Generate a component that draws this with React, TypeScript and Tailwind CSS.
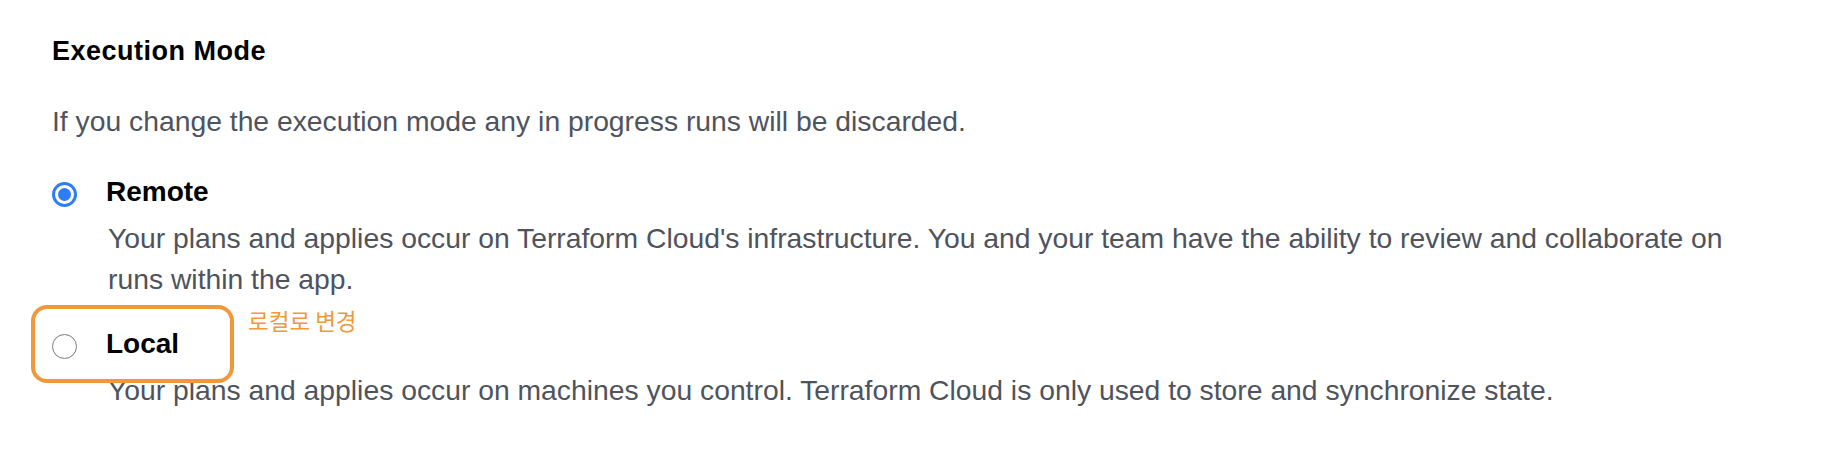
const font = { fontFamily: '"Liberation Sans", Arial, sans-serif' };

interface OptionProps {
    label: string;
    description: string;
    checked: boolean;
    children?: React.ReactNode;
}

const Radio = ({ checked }: { checked: boolean }) => {
    if (checked) {
        return (
            <span className="mt-[11px] flex h-[25px] w-[25px] shrink-0 items-center justify-center rounded-full border-[3px] border-[#2f7df6] bg-white">
                <span className="h-[13px] w-[13px] rounded-full bg-[#2f7df6]" />
            </span>
        );
    }
    return <span className="mt-[11px] h-[25px] w-[25px] shrink-0 rounded-full border-[1.5px] border-[#7a7a7a] bg-white" />;
};

const Option = (props: OptionProps) => {
    return (
        <div className="relative flex flex-col">
            {props.children}
            <label className="relative flex items-start gap-[29px]">
                <Radio checked={props.checked} />
                <span className="text-[28px] font-bold leading-[42px] text-black">{props.label}</span>
            </label>
            <p className="mt-[5px] w-[1716px] pl-[56px] text-[28.3px] leading-[41px] text-[#4e535d]">{props.description}</p>
        </div>
    );
};

export default function App() {
    return (
        <div className="h-[462px] w-[1830px] overflow-hidden bg-white pl-[52px] pt-[30px]" style={font}>
            <h2 className="text-[27px] font-bold leading-[42px] tracking-[0.5px] text-black">Execution Mode</h2>
            <p className="mt-[28px] text-[28.3px] leading-[42px] text-[#4e535d]">
                If you change the execution mode any in progress runs will be discarded.
            </p>

            <div className="mt-[29px] flex flex-col gap-[23px]">
                <Option
                    checked
                    label="Remote"
                    description="Your plans and applies occur on Terraform Cloud's infrastructure. You and your team have the ability to review and collaborate on runs within the app."
                />
                <Option
                    checked={false}
                    label="Local"
                    description="Your plans and applies occur on machines you control. Terraform Cloud is only used to store and synchronize state."
                >
                    {/* annotation over the option */}
                    <div className="pointer-events-none absolute left-[-21px] top-[-18px] z-10 h-[78px] w-[203px] rounded-[16px] border-[4px] border-[#f1983b]" />
                    <span
                        className="absolute left-[196px] top-[-19px] z-10 text-[22.5px] leading-[32px] text-[#f1983b]"
                        style={{ fontFamily: '"Noto Sans CJK KR", "Liberation Sans", sans-serif' }}
                    >
                        로컬로 변경
                    </span>
                </Option>
            </div>
        </div>
    );
}
